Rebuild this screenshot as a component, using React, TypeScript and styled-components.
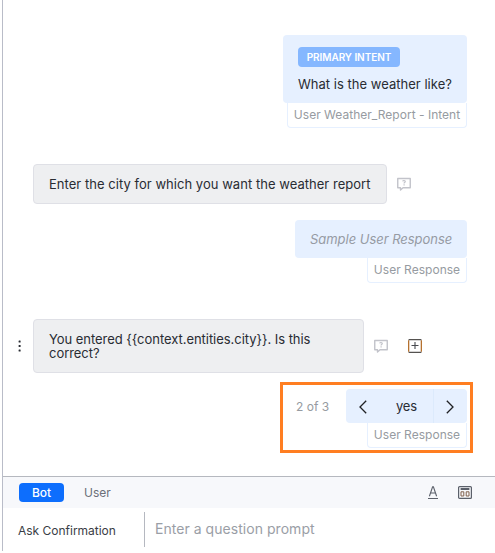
import React from 'react';
import styled, { createGlobalStyle } from 'styled-components';

const GlobalStyle = createGlobalStyle`
  * { box-sizing: border-box; }
  body { margin: 0; background: #fff; font-family: Inter, sans-serif; overflow: hidden; }
  svg { display: block; flex: none; }
  button { font: inherit; border: 0; background: none; padding: 0; }
`;

const Panel = styled.main`
  width: 493px;
  height: 551px;
  margin-left: 2px;
  border-left: 1px solid #b9bcc8;
  display: flex;
  flex-direction: column;
`;

const Conversation = styled.section`
  height: 476px;
  flex: none;
  padding: 35px 28px 0 14px;
`;

const UserTurn = styled.div<{ $gap?: number }>`
  display: flex;
  flex-direction: column;
  align-items: flex-end;
  margin-top: ${p => p.$gap ?? 0}px;
`;

const UserBubble = styled.div<{ $w: number; $h: number; $sample?: boolean }>`
  width: ${p => p.$w}px;
  height: ${p => p.$h}px;
  padding: 12px 0 0 15px;
  border-radius: 4px;
  background: #e6f0ff;
  color: ${p => (p.$sample ? '#969ba4' : '#292c33')};
  font-style: ${p => (p.$sample ? 'italic' : 'normal')};
  font-size: 13px;
  line-height: 15px;
  letter-spacing: ${p => (p.$sample ? '-0.03px' : '0.02px')};
  white-space: nowrap;
`;

const IntentBadge = styled.div`
  width: 102px;
  height: 20px;
  margin-bottom: 10px;
  border-radius: 4px;
  background: #85b7ff;
  color: #fff;
  font-size: 10px;
  font-weight: 600;
  line-height: 21px;
  letter-spacing: -0.05px;
  text-align: center;
`;

const Caption = styled.div<{ $w: number }>`
  width: ${p => p.$w}px;
  height: 25px;
  border: 1px solid #e6f0ff;
  border-top: 0;
  border-radius: 0 0 4px 4px;
  color: #969ba1;
  font-size: 12px;
  line-height: 23px;
  letter-spacing: 0.02px;
  text-align: center;
  white-space: nowrap;
`;

const BotTurn = styled.div<{ $gap: number }>`
  display: flex;
  align-items: center;
  margin-top: ${p => p.$gap}px;
`;

const Gutter = styled.div`
  width: 16px;
  display: flex;
  justify-content: flex-start;
`;

const BotBubble = styled.div<{ $w: number; $tight?: boolean }>`
  width: ${p => p.$w}px;
  padding: 12px 14px 12px 15px;
  border: 1px solid #dfe0e6;
  border-radius: 4px;
  background: #eeeff1;
  color: #292c33;
  font-size: 13px;
  line-height: 14px;
  letter-spacing: ${p => (p.$tight ? '-0.045px' : '0.035px')};
  white-space: nowrap;
`;

const TurnActions = styled.div`
  display: flex;
  gap: 20px;
  margin-left: 10px;
`;

const Highlight = styled.div`
  width: 193px;
  height: 71px;
  margin: 9px -6px 0 auto;
  padding: 4px 3px 0;
  border: 3px solid #ff7e21;
`;

const PagerRow = styled.div`
  display: flex;
  justify-content: space-between;
  align-items: center;
  padding-left: 10px;
`;

const PageCount = styled.span`
  color: #969ba1;
  font-size: 12px;
`;

const Pager = styled.div`
  display: grid;
  grid-template-columns: 34px 53px 34px;
  width: 121px;
  height: 34px;
  border-radius: 4px;
  overflow: hidden;
  background: #e6f0ff;
  color: #292c33;
  font-size: 13px;
  letter-spacing: -0.1px;
`;

const PagerButton = styled.button<{ $divided?: boolean }>`
  display: flex;
  align-items: center;
  justify-content: center;
  color: #202124;
  padding-right: ${p => (p.$divided ? 2 : 0)}px;
  border-left: ${p => (p.$divided ? '1px solid #dceafc' : '0')};
`;

const PagerValue = styled.span`
  line-height: 35px;
  text-align: center;
`;

const Toolbar = styled.div`
  height: 32px;
  flex: none;
  display: flex;
  align-items: center;
  padding: 0 23px 0 16px;
  border-top: 1px solid #b5b8bf;
  background: #f7f8fb;
`;

const Tab = styled.button<{ $active?: boolean }>`
  width: ${p => (p.$active ? 45 : 67)}px;
  height: 19px;
  border-radius: 4px;
  background: ${p => (p.$active ? '#0d6efd' : 'transparent')};
  color: ${p => (p.$active ? '#fff' : '#6b6f78')};
  font-size: 12px;
  font-weight: ${p => (p.$active ? 500 : 400)};
  line-height: 20px;
`;

const Tools = styled.div`
  display: flex;
  align-items: center;
  gap: 20px;
  margin-left: auto;
`;

const Composer = styled.div`
  flex: 1;
  display: flex;
  padding-top: 4px;
`;

const StepName = styled.div`
  width: 141px;
  padding-left: 15px;
  color: #3a3d45;
  font-size: 12px;
  line-height: 37px;
  letter-spacing: -0.01px;
`;

const Prompt = styled.input`
  width: 300px;
  height: 35px;
  padding: 0 0 2px 10px;
  border: 0;
  border-left: 1px solid #b5b8c0;
  font: 14px Inter, sans-serif;
  letter-spacing: 0.04px;
  &::placeholder { color: #9a9ea6; opacity: 1; }
`;

const CommentIcon = () => (
  <svg width="14" height="14" viewBox="0 0 14 14" fill="none" stroke="#c2c3ca">
    <path d="M.75 1.5h12.5v9.2H6L3.5 13v-2.3H.75z" strokeWidth="1.4" strokeLinejoin="round" />
    <path d="M5.7 4.4c.2-1.3 2.6-1.1 2.6.1 0 .9-1.2.8-1.2 1.9M7.1 7.3v1.2" strokeWidth="1.2" />
  </svg>
);

const AddIcon = () => (
  <svg width="14" height="14" viewBox="0 0 14 14" fill="none">
    <path d="M.65 1.3v11.4M13.35 1.3v11.4" stroke="#b5712f" strokeWidth="1.3" />
    <path d="M.6.65h12.8M.6 13.35h12.8" stroke="#555250" strokeWidth="1.3" />
    <path d="M3.5 6.5h7M7 3v7" stroke="#484b50" strokeWidth="1.1" />
  </svg>
);

const MoreIcon = () => (
  <svg width="6" height="12" viewBox="0 0 6 12" fill="#292c33">
    <rect x="1.6" y=".5" width="2" height="2" rx=".5" />
    <rect x="1.6" y="5" width="2" height="2" rx=".5" />
    <rect x="1.6" y="9.5" width="2" height="2" rx=".5" />
  </svg>
);

const Chevron = ({ next }: { next?: boolean }) => (
  <svg width="8" height="14" viewBox="0 0 8 14" fill="none" stroke="currentColor" strokeWidth="1.3">
    <path d={next ? 'M.8.8 7 7 .8 13.2' : 'M7.2.8 1 7l6.2 6.2'} />
  </svg>
);

const TextStyleIcon = () => (
  <svg width="10" height="13" viewBox="0 0 10 13" fill="none" stroke="#5b606a">
    <path d="M1.4 10.3 4.6.8h.8l3.2 9.5M2.5 7h5" strokeWidth="1.1" />
    <path d="M0 12.5h10" />
  </svg>
);

const TemplateIcon = () => (
  <svg width="14" height="13" viewBox="0 0 14 13" fill="none" stroke="#5b606a">
    <rect x=".6" y=".6" width="12.8" height="11.8" rx="1" strokeWidth="1.2" />
    <path d="M2.6 3h8.8" strokeWidth="2" />
    <path d="M3 5.8h2.8v4.2H3zM8.2 5.8H11v4.2H8.2z" stroke="#80614d" />
  </svg>
);

export default function App() {
  return (
    <>
      <GlobalStyle />
      <Panel>
        <Conversation>
          <UserTurn>
            <UserBubble $w={184} $h={68}>
              <IntentBadge>PRIMARY INTENT</IntentBadge>
              What is the weather like?
            </UserBubble>
            <Caption $w={180}>User Weather_Report - Intent</Caption>
          </UserTurn>

          <BotTurn $gap={36}>
            <Gutter />
            <BotBubble $w={354}>Enter the city for which you want the weather report</BotBubble>
            <TurnActions><CommentIcon /></TurnActions>
          </BotTurn>

          <UserTurn $gap={16}>
            <UserBubble $w={172} $h={38} $sample>Sample User Response</UserBubble>
            <Caption $w={100}>User Response</Caption>
          </UserTurn>

          <BotTurn $gap={36}>
            <Gutter><MoreIcon /></Gutter>
            <BotBubble $w={331} $tight>
              {'You entered {{context.entities.city}}. Is this'}
              <br />
              correct?
            </BotBubble>
            <TurnActions><CommentIcon /><AddIcon /></TurnActions>
          </BotTurn>

          <Highlight>
            <PagerRow>
              <PageCount>2 of 3</PageCount>
              <Pager>
                <PagerButton aria-label="Previous"><Chevron /></PagerButton>
                <PagerValue>yes</PagerValue>
                <PagerButton aria-label="Next" $divided><Chevron next /></PagerButton>
              </Pager>
            </PagerRow>
            <UserTurn><Caption $w={100}>User Response</Caption></UserTurn>
          </Highlight>
        </Conversation>

        <Toolbar>
          <Tab $active>Bot</Tab>
          <Tab>User</Tab>
          <Tools><TextStyleIcon /><TemplateIcon /></Tools>
        </Toolbar>
        <Composer>
          <StepName>Ask Confirmation</StepName>
          <Prompt placeholder="Enter a question prompt" />
        </Composer>
      </Panel>
    </>
  );
}
